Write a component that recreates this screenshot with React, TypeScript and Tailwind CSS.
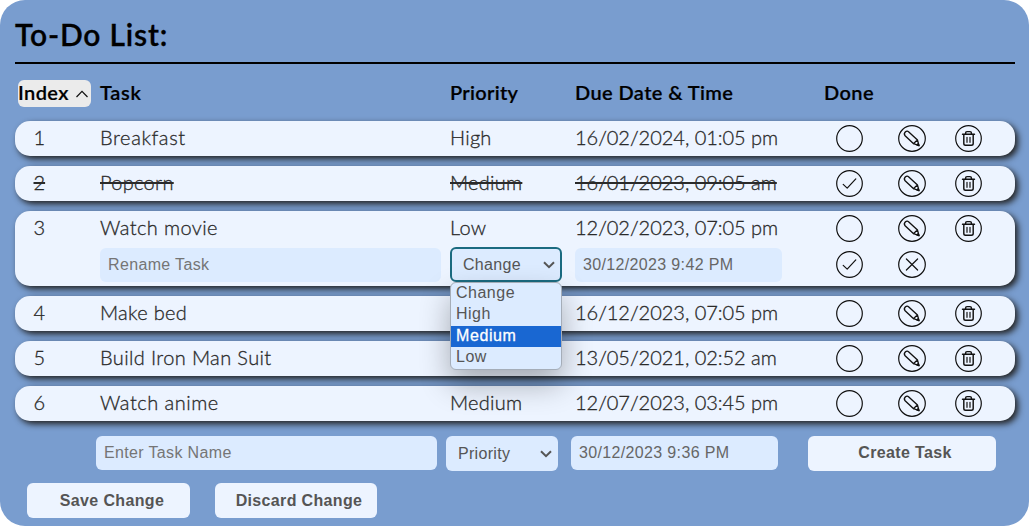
import React from "react";

type Task = { id: number; name: string; priority?: string; due: string; done?: boolean; editing?: boolean; spacing: string };

const tasks: Task[] = [
  { id: 1, name: "Breakfast", priority: "High", due: "16/02/2024, 01:05 pm", spacing: "tracking-[0.6px]" },
  { id: 2, name: "Popcorn", priority: "Medium", due: "16/01/2023, 09:05 am", done: true, spacing: "tracking-[0.3px]" },
  { id: 3, name: "Watch movie", priority: "Low", due: "12/02/2023, 07:05 pm", editing: true, spacing: "tracking-[0.4px]" },
  { id: 4, name: "Make bed", due: "16/12/2023, 07:05 pm", spacing: "tracking-[0.3px]" },
  { id: 5, name: "Build Iron Man Suit", due: "13/05/2021, 02:52 am", spacing: "tracking-[0.37px]" },
  { id: 6, name: "Watch anime", priority: "Medium", due: "12/07/2023, 03:45 pm", spacing: "tracking-[0.5px]" },
];

const columns = "grid grid-cols-[85px_350px_125px_246px_56px_68px_1fr]";

function Ring({ wide, children }: { wide?: boolean; children?: React.ReactNode }) {
  return (
    <svg width={wide ? 28 : 27} height="27" viewBox={wide ? "-14 -13.5 28 27" : "-13.5 -13.5 27 27"} fill="none" stroke="#111" strokeWidth="1.2" strokeLinecap="round" strokeLinejoin="round">
      <ellipse rx={wide ? 13.3 : 12.8} ry="12.8" />
      {children}
    </svg>
  );
}

const Check = () => <Ring><path d="M-6.3 .9 -2.3 4.6 6.3 -4.6" /></Ring>;
const Cross = () => <Ring wide><path d="M-5.6 -5.5 5.6 5.5M5.6 -5.5 -5.6 5.5" /></Ring>;
const Pencil = () => (
  <Ring wide>
    <path d="M7 7.2 1.6 5.2 -6.9 -2.8C-9 -5.2 -5.6 -8.8 -3.2 -6.6L5.5 1.6ZM1.6 5.2C2.4 4.2 3.9 2.4 5.5 1.6" strokeWidth="1.35" />
    <path d="M7 7.2 4.9 6.4 6.3 5Z" fill="#111" />
  </Ring>
);
const Trash = () => (
  <Ring>
    <path d="M-6 -4.2H6M-2.9 -4.4V-5.4Q-2.9 -6.9 -1.5 -6.9H1.5Q2.9 -6.9 2.9 -5.4V-4.4M-4.7 -4V5Q-4.7 6.8 -2.9 6.8H2.9Q4.7 6.8 4.7 5V-4" strokeWidth="1.45" />
    <path d="M-1.5 -1.2V3.8M1.5 -1.2V3.8" />
  </Ring>
);

const Chevron = () => (
  <svg width="12" height="8" viewBox="0 0 12 8" fill="none" stroke="#555" strokeWidth="2">
    <path d="M1 1.2 6 6.2 11 1.2" />
  </svg>
);

const field = "flex h-[34px] items-center rounded-md bg-[#dcebff] pl-2 pb-px text-[16px] tracking-[0.35px]";

function TaskRow({ task }: { task: Task }) {
  const text = task.done ? "line-through decoration-2" : "";
  return (
    <div className="rounded-[15px] bg-[#edf4ff] shadow-[3px_3px_6px_#222]">
      <div className={`${columns} h-[35px] items-center font-['Lato'] text-[20px] leading-[33px] font-light text-[#2a2a2a] [-webkit-text-stroke:0.3px_#2a2a2a]`}>
        <div className="pb-[2px] pl-[18.5px]"><span className={text}>{task.id}</span></div>
        <div className="pb-[2px]"><span className={`${text} ${task.spacing}`}>{task.name}</span></div>
        <div className="pb-[2px]"><span className={`${text} tracking-[0.25px]`}>{task.priority}</span></div>
        <div className="pb-[2px]"><span className={`${text} tracking-[-0.03px]`}>{task.due}</span></div>
        <div className="flex pl-[15px]">{task.done ? <Check /> : <Ring />}</div>
        <div className="flex pl-[21px]"><Pencil /></div>
        <div className="flex pl-[10px]"><Trash /></div>
      </div>
      {task.editing && (
        <div className={`${columns} h-10 items-start font-['Liberation_Sans']`}>
          <div />
          <div className={`${field} mt-[2px] w-[341px] text-[#757575]`}>Rename Task</div>
          <div className="relative mt-px w-[112px]">
            <div className="flex h-[35px] items-center justify-between rounded-md border-2 border-[#1b6b80] bg-[#dcebff] pr-[5px] pl-[11px] text-[16px] tracking-[0.3px] text-[#555]">
              Change <Chevron />
            </div>
            <div className="absolute top-[35px] left-0 z-10 h-[88px] w-[112px] rounded-md border border-[#a5adb8] bg-[#dcebff] text-[16px] leading-[19px] tracking-[0.5px] text-[#555] shadow-[0_14px_30px_rgba(0,0,0,0.3)]">
              <div className="h-[21px] pl-[5px]">Change</div>
              <div className="h-[22px] pl-[5px]">High</div>
              <div className="h-[21px] bg-[#1967d2] pl-[5px] tracking-[0.6px] text-white [-webkit-text-stroke:0.3px_#fff]">Medium</div>
              <div className="h-[21px] pl-[5px]">Low</div>
            </div>
          </div>
          <div className={`${field} mt-[2px] w-[207px] text-[#666]`}>30/12/2023 9:42 PM</div>
          <div className="mt-[5px] flex pl-[15px]"><Check /></div>
          <div className="mt-[5px] flex pl-[21px]"><Cross /></div>
        </div>
      )}
    </div>
  );
}

export default function App() {
  const button = "flex h-[35px] items-center justify-center rounded-md bg-[#edf4ff] text-[16px] font-bold tracking-[0.35px] text-[#555]";
  return (
    <main className="h-[526px] w-[1029px] overflow-hidden rounded-[25px] bg-[#799dcf] px-[15px] pr-[14px] font-['Liberation_Sans']">
      <h1 className="h-[64px] w-[1000px] border-b-2 border-black pt-[14px] font-['Lato'] text-[30px] leading-10 font-semibold [-webkit-text-stroke:0.3px_#000]">
        <span className="tracking-[0.8px]">To-Do List:</span>
      </h1>
      <div className={`${columns} mt-4 h-[27px] w-[1000px] items-start font-['Lato'] text-[20px] leading-[25px] font-semibold [-webkit-text-stroke:0.2px_#000]`}>
        <div className="ml-[3px] flex h-[27px] w-[73px] items-center justify-between rounded-md bg-[#ebebeb] pr-[3px]">
          <span className="pb-[2px] tracking-[0.4px]">Index</span>
          <svg width="12" height="8" viewBox="0 0 12 8" fill="none" stroke="#111" strokeWidth="1.2"><path d="M.5 7 6 1.3 11.5 7" /></svg>
        </div>
        <div><span className="tracking-[0.7px]">Task</span></div>
        <div><span className="tracking-[0.3px]">Priority</span></div>
        <div><span className="tracking-[0.4px]">Due Date &amp; Time</span></div>
        <div className="pl-[3px]"><span className="tracking-[0.4px]">Done</span></div>
      </div>
      <section className="mt-[14px] flex w-[1000px] flex-col gap-[10px]">
        {tasks.map((task) => <TaskRow key={task.id} task={task} />)}
      </section>
      <div className="mt-[15px] flex h-[35px] items-start pl-[81px]">
        <div className={`${field} w-[341px] text-[#757575]`}>Enter Task Name</div>
        <div className="ml-[9px] flex h-[35px] w-[112px] items-center justify-between rounded-md bg-[#dcebff] pr-[6px] pl-3 text-[16px] tracking-[0.3px] text-[#555]">
          Priority <Chevron />
        </div>
        <div className={`${field} ml-[13px] w-[207px] text-[#666]`}>30/12/2023 9:36 PM</div>
        <button className={`${button} ml-[30px] w-[188px] pb-[2px] pl-[6px]`}>Create Task</button>
      </div>
      <div className="mt-3 flex gap-[25px] pl-3">
        <button className={`${button} w-[163px] pl-[7px]`}>Save Change</button>
        <button className={`${button} w-[162px] pl-[6px]`}>Discard Change</button>
      </div>
    </main>
  );
}
